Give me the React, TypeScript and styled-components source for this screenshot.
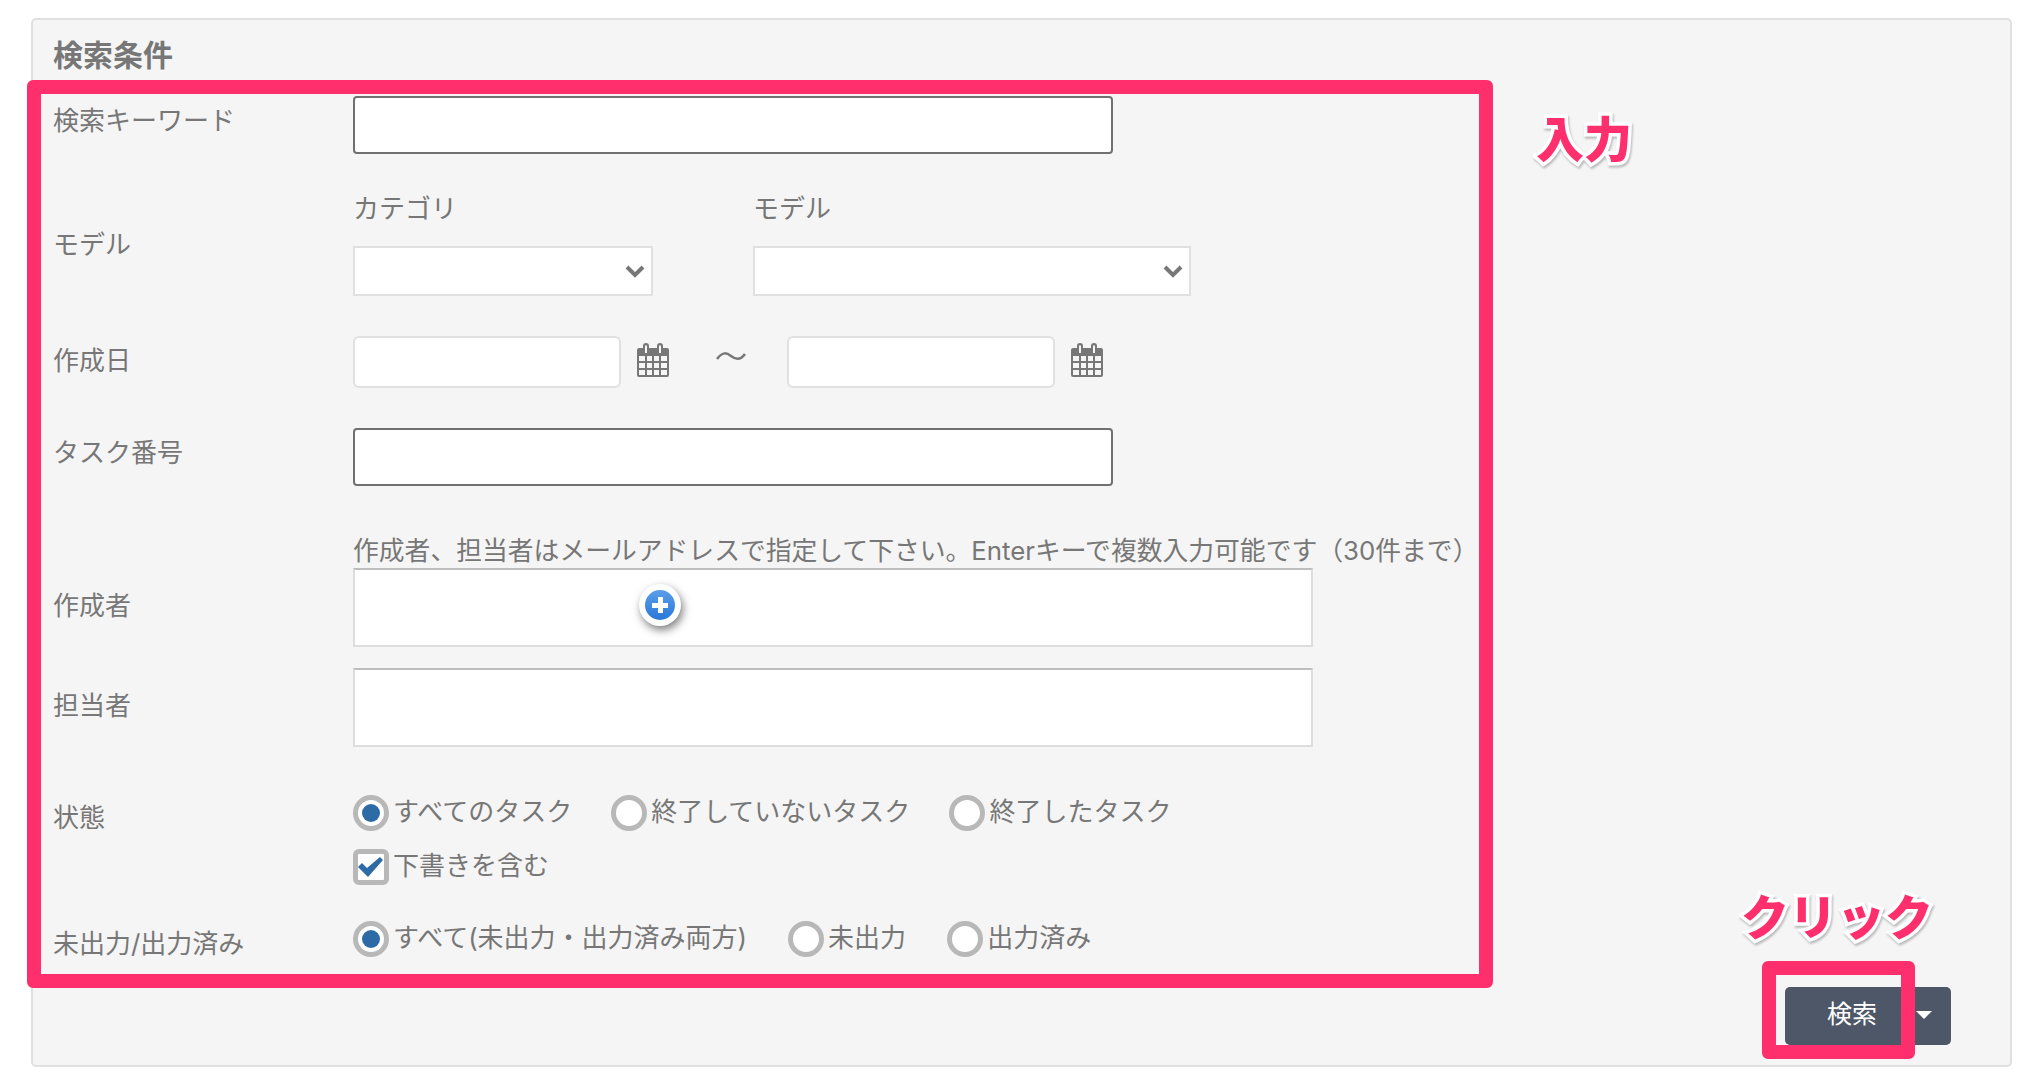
import styled, { createGlobalStyle } from "styled-components";

const GlobalStyle = createGlobalStyle`
  html, body {
    margin: 0;
    padding: 0;
    background: #fff;
  }
  body {
    font-family: Inter, "Noto Sans CJK JP", "Noto Sans", sans-serif;
    color: #777;
  }
  * {
    box-sizing: border-box;
  }
`;

const Page = styled.div`
  width: 2021px;
  height: 1091px;
  padding: 18px 9px 0 31px;
  overflow: hidden;
`;
const Panel = styled.form`
  position: relative;
  height: 1049px;
  padding: 0 59px 0 20px;
  background: #f5f5f5;
  border: 2px solid #e0e0e0;
  border-radius: 5px;
`;
const Heading = styled.h2`
  margin: 0;
  height: 76px;
  padding-top: 15px;
  font-size: 30px;
  line-height: 40px;
  font-weight: 700;
  color: #777;
`;
const Row = styled.div<{ $gap: number }>`
  display: grid;
  grid-template-columns: 300px 1fr;
  align-items: start;
  margin-top: ${(props) => props.$gap}px;
`;
const Label = styled.div<{ $offset: number }>`
  padding-top: ${(props) => props.$offset}px;
  font-size: 26px;
  line-height: 30px;
  white-space: nowrap;
`;
const TextInput = styled.input`
  display: block;
  width: 760px;
  height: 58px;
  background: #fff;
  border: 2px solid #707070;
  border-radius: 4px;
  outline: none;
`;
const Selects = styled.div`
  display: flex;
  gap: 100px;
`;
const SelectColumn = styled.div<{ $width: number }>`
  width: ${(props) => props.$width}px;
`;
const SelectTitle = styled.div`
  height: 54px;
  padding-top: 2px;
  font-size: 26px;
  line-height: 30px;
`;
const SelectWrap = styled.div`
  position: relative;
  height: 50px;
`;
const Select = styled.select`
  display: block;
  width: 100%;
  height: 100%;
  appearance: none;
  background: #fff;
  border: 2px solid #e0e0e0;
  border-radius: 0;
  outline: none;
`;
const Chevron = styled.svg`
  position: absolute;
  right: 8px;
  top: 18px;
  width: 20px;
  height: 14px;
  pointer-events: none;
`;
const DateRow = styled.div`
  display: flex;
  align-items: center;
  height: 52px;
`;
const DateInput = styled.input`
  width: 268px;
  height: 52px;
  background: #fff;
  border: 2px solid #e0e0e0;
  border-radius: 6px;
  outline: none;
`;
const CalendarIcon = styled.svg`
  flex: none;
  width: 32px;
  height: 34px;
  margin-left: 16px;
  margin-top: -4px;
`;
const Tilde = styled.svg`
  flex: none;
  width: 30px;
  height: 12px;
  margin: -10px 41px 0 47px;
`;
const Note = styled.div`
  height: 33px;
  padding-top: 1px;
  font-size: 25.8px;
  line-height: 30px;
  white-space: nowrap;
`;
const AddressBox = styled.div`
  position: relative;
  width: 960px;
  height: 79px;
  background: #fff;
  border: 2px solid #ddd;
  border-top-color: #bdbdbd;
`;
const AddCursor = styled.div`
  position: absolute;
  left: 284px;
  top: 14px;
  width: 42px;
  height: 42px;
  display: flex;
  align-items: center;
  justify-content: center;
  background: #fff;
  border-radius: 50%;
  box-shadow: 2px 4px 8px rgba(0, 0, 0, 0.5);
`;
const AddDisc = styled.div`
  position: relative;
  width: 30px;
  height: 30px;
  border-radius: 50%;
  background: linear-gradient(#5a9ee8, #2a78d8);
  &::before {
    content: "";
    position: absolute;
    left: 7px;
    top: 12.5px;
    width: 16px;
    height: 5px;
    background: #fff;
  }
  &::after {
    content: "";
    position: absolute;
    left: 12.5px;
    top: 7px;
    width: 5px;
    height: 16px;
    background: #fff;
  }
`;
const Options = styled.div<{ $gap: number }>`
  display: flex;
  align-items: center;
  height: 36px;
  gap: ${(props) => props.$gap}px;
`;
const Option = styled.label`
  display: flex;
  align-items: center;
  gap: 4px;
`;
const OptionText = styled.span`
  padding-bottom: 4px;
  font-size: 26px;
  line-height: 30px;
  white-space: nowrap;
`;
const Radio = styled.input`
  flex: none;
  display: block;
  position: relative;
  width: 36px;
  height: 36px;
  margin: -1px 0 1px;
  appearance: none;
  background: #fff;
  border: 5px solid #b8b8b8;
  border-radius: 50%;
  &:checked::after {
    content: "";
    position: absolute;
    left: 4px;
    top: 4px;
    width: 18px;
    height: 18px;
    border-radius: 50%;
    background: #2c6ba5;
  }
`;
const CheckRow = styled.div`
  margin-top: 18px;
`;
const CheckBox = styled.span`
  flex: none;
  display: flex;
  align-items: center;
  justify-content: center;
  width: 36px;
  height: 36px;
  margin: -1px 0 1px;
  background: #fff;
  border: 5px solid #b8b8b8;
  border-radius: 6px;
`;
const Footer = styled.div`
  display: flex;
  justify-content: flex-end;
  margin-top: 28px;
`;
const MainButton = styled.button`
  width: 117px;
  height: 58px;
  padding: 0 0 5px 17px;
  background: #4e5768;
  border: none;
  border-radius: 5px 0 0 5px;
  color: #fff;
  font-family: inherit;
  font-size: 25px;
  line-height: 50px;
`;
const ToggleButton = styled.button`
  display: flex;
  align-items: center;
  justify-content: center;
  width: 49px;
  height: 58px;
  padding: 0 5px 3px 0;
  background: #4e5768;
  border: none;
  border-radius: 0 5px 5px 0;
  &::after {
    content: "";
    border-left: 8px solid transparent;
    border-right: 8px solid transparent;
    border-top: 8px solid #fff;
  }
`;
const Highlight = styled.div<{ $left: number; $top: number; $width: number; $height: number }>`
  position: absolute;
  left: ${(props) => props.$left}px;
  top: ${(props) => props.$top}px;
  width: ${(props) => props.$width}px;
  height: ${(props) => props.$height}px;
  border: 14px solid #ff2f6d;
  border-radius: 6px;
  pointer-events: none;
`;
const Callout = styled.div<{ $left: number; $top: number }>`
  position: absolute;
  left: ${(props) => props.$left}px;
  top: ${(props) => props.$top}px;
  font-size: 48px;
  line-height: 60px;
  font-weight: 900;
  color: #ff2f6d;
  white-space: nowrap;
  -webkit-text-stroke: 7px #fff;
  paint-order: stroke fill;
  filter: drop-shadow(1px 2px 1px rgba(0, 0, 0, 0.25));
`;

const Calendar = () => (
  <CalendarIcon viewBox="0 0 32 34">
    <path
      fill="#777"
      fillRule="evenodd"
      d="M2 5h4V3a3 3 0 0 1 6 0v2h8V3a3 3 0 0 1 6 0v2h4a2 2 0 0 1 2 2v25a2 2 0 0 1-2 2H2a2 2 0 0 1-2-2V7a2 2 0 0 1 2-2zM8 2.500V10h2V2.500zM22 2.500V10h2V2.500zM2 13v5h6v-5zM10 13v5h5v-5zM17 13v5h5v-5zM24 13v5h6v-5zM2 20v5h6v-5zM10 20v5h5v-5zM17 20v5h5v-5zM24 20v5h6v-5zM2 27v5h6v-5zM10 27v5h5v-5zM17 27v5h5v-5zM24 27v5h6v-5z"
    />
  </CalendarIcon>
);

const SelectField = ({ title, width }: { title: string; width: number }) => (
  <SelectColumn $width={width}>
    <SelectTitle>{title}</SelectTitle>
    <SelectWrap>
      <Select />
      <Chevron viewBox="0 0 20 14">
        <path d="M2 3l8 8 8-8" fill="none" stroke="#777" strokeWidth="4" />
      </Chevron>
    </SelectWrap>
  </SelectColumn>
);

const RadioOption = ({ name, text, checked }: { name: string; text: string; checked?: boolean }) => (
  <Option>
    <Radio type="radio" name={name} defaultChecked={checked} />
    <OptionText>{text}</OptionText>
  </Option>
);

function App() {
  return (
    <>
      <GlobalStyle />
      <Page>
        <Panel>
          <Heading>検索条件</Heading>
          <Row $gap={0}>
            <Label $offset={10}>検索キーワード</Label>
            <TextInput />
          </Row>
          <Row $gap={38}>
            <Label $offset={38}>モデル</Label>
            <Selects>
              <SelectField title="カテゴリ" width={300} />
              <SelectField title="モデル" width={438} />
            </Selects>
          </Row>
          <Row $gap={40}>
            <Label $offset={10}>作成日</Label>
            <DateRow>
              <DateInput />
              <Calendar />
              <Tilde viewBox="0 0 30 12">
                <path d="M1 8c6-8 10-6 14-3s9 5 14-2" fill="none" stroke="#777" strokeWidth="2.500" />
              </Tilde>
              <DateInput />
              <Calendar />
            </DateRow>
          </Row>
          <Row $gap={40}>
            <Label $offset={10}>タスク番号</Label>
            <TextInput />
          </Row>
          <Row $gap={49}>
            <Label $offset={56}>作成者</Label>
            <div>
              <Note>作成者、担当者はメールアドレスで指定して下さい。Enterキーで複数入力可能です（30件まで）</Note>
              <AddressBox>
                <AddCursor>
                  <AddDisc />
                </AddCursor>
              </AddressBox>
            </div>
          </Row>
          <Row $gap={21}>
            <Label $offset={23}>担当者</Label>
            <AddressBox />
          </Row>
          <Row $gap={49}>
            <Label $offset={7}>状態</Label>
            <div>
              <Options $gap={39}>
                <RadioOption name="status" text="すべてのタスク" checked />
                <RadioOption name="status" text="終了していないタスク" />
                <RadioOption name="status" text="終了したタスク" />
              </Options>
              <CheckRow>
                <Option>
                  <CheckBox>
                    <svg width="26" height="20" viewBox="0 0 26 20">
                      <path d="M0 10l4-4 5 5L22 0l3 3-15 17z" fill="#2c6ba5" />
                    </svg>
                  </CheckBox>
                  <OptionText>下書きを含む</OptionText>
                </Option>
              </CheckRow>
            </div>
          </Row>
          <Row $gap={36}>
            <Label $offset={7}>未出力/出力済み</Label>
            <Options $gap={41}>
              <RadioOption name="output" text="すべて(未出力・出力済み両方)" checked />
              <RadioOption name="output" text="未出力" />
              <RadioOption name="output" text="出力済み" />
            </Options>
          </Row>
          <Footer>
            <MainButton type="button">検索</MainButton>
            <ToggleButton type="button" aria-label="menu" />
          </Footer>
          <Highlight $left={-6} $top={60} $width={1466} $height={908} />
          <Highlight $left={1729} $top={941} $width={153} $height={98} />
          <Callout $left={1503} $top={90}>入力</Callout>
          <Callout $left={1708} $top={868}>クリック</Callout>
        </Panel>
      </Page>
    </>
  );
}

export default App;
